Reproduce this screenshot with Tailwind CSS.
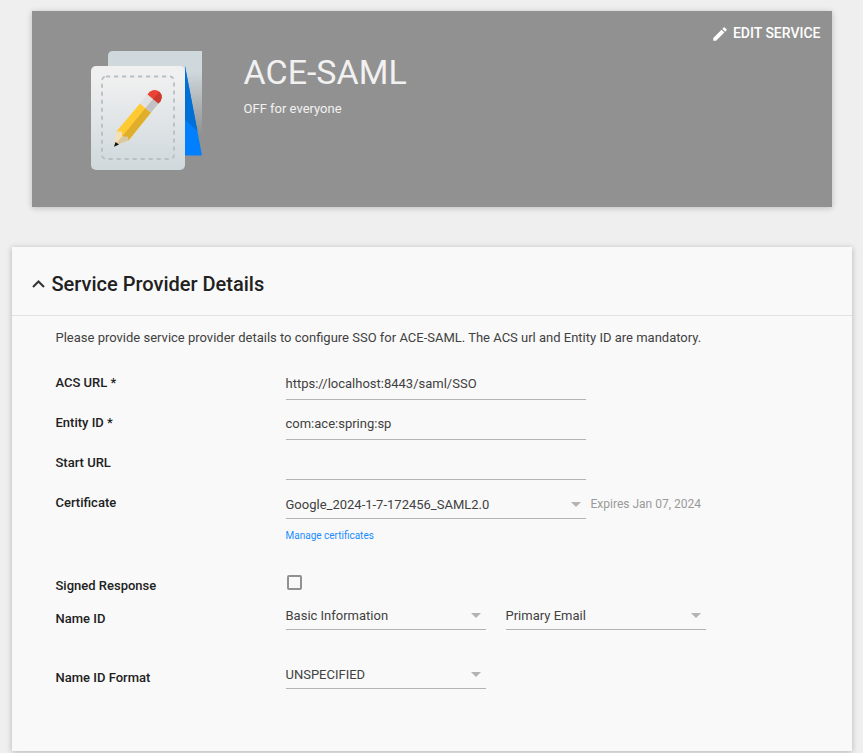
<!DOCTYPE html>
<html lang="en">
<head>
<meta charset="utf-8">
<title>ACE-SAML</title>
<script src="https://cdn.jsdelivr.net/npm/@tailwindcss/browser@4"></script>
</head>
<body class="bg-[#efefef] h-[753px] overflow-hidden font-['Roboto',sans-serif] text-[13px] leading-5 text-[#414141]">
<header class="mt-[11px] ml-[31.500px] w-[800px] h-[196px] bg-[#919191] shadow-[0_1px_6px_rgba(0,0,0,0.22)] flex justify-between text-[#f1f1f1]">
  <div class="flex">
    <svg class="mt-10 ml-[59.500px] w-[112px] h-[120px]" viewBox="0 0 112 120">
      <defs>
        <linearGradient id="back" x1="0" y1="0" x2="0" y2="1"><stop offset="0.25" stop-color="#cfd8dc"/><stop offset="1" stop-color="#919191"/></linearGradient>
        <linearGradient id="front" x1="0" y1="0" x2="0" y2="1"><stop offset="0.1" stop-color="#f0f0f0"/><stop offset="1" stop-color="#cfd8dc"/></linearGradient>
      </defs>
      <path d="M22 0H111V83H17V5Q17 0 22 0Z" fill="url(#back)"/>
      <path d="M94 15 111 104.500H94Z" fill="#0080ff"/>
      <path d="M94 15 106.500 80 94 69Z" fill="#006fd6"/>
      <rect x="0" y="15" width="94" height="104" rx="5" fill="url(#front)"/>
      <rect x="11" y="25.500" width="72" height="82.500" rx="4" fill="none" stroke="#b5bfc4" stroke-width="1.800" stroke-dasharray="4.200 3.800"/>
      <path d="M25.500 80.500 49 52.500 60 61.500 37.500 89.500Z" fill="#ffca32"/>
      <path d="M54.500 57 60 61.500 37.500 89.500 31.500 85Z" fill="#dfaf2b"/>
      <path d="M49 52.500 56.500 43.500 67.500 52.500 60 61.500Z" fill="#e2e2e2"/>
      <path d="M54.500 57 62 48 67.500 52.500 60 61.500Z" fill="#c2c2c2"/>
      <path d="M56.500 43.500A7.800 7.800 0 0 1 68.500 40.700 7.800 7.800 0 0 1 67.500 52.500Z" fill="#ea4335"/>
      <path d="M62 48 68.500 40.700A7.800 7.800 0 0 1 67.500 52.500Z" fill="#cb3a2e"/>
      <path d="M25.500 80.500H31V85.500L37.500 89.500 23 95Z" fill="#f5e0b5"/>
      <path d="M23 95 31 85.500 37 85.500 37.500 89.500Z" fill="#dbc8a1"/>
      <path d="M24.500 91 28 93.500 23 95.700Z" fill="#111"/>
    </svg>
    <div class="ml-[40.500px] pt-[41px]">
      <h1 class="text-[34px] leading-10 font-normal">ACE-SAML</h1>
      <p class="mt-[7px]">OFF for everyone</p>
    </div>
  </div>
  <div class="flex h-5 mt-3 mr-[11px] items-center gap-1 text-[14px] font-medium text-white">
    <svg class="w-[18px] h-[18px] mt-px" viewBox="0 0 24 24" fill="currentColor"><path d="M3 17.250V21h3.750L17.810 9.940l-3.750-3.750L3 17.250zM20.710 7.040a1 1 0 0 0 0-1.410l-2.340-2.340a1 1 0 0 0-1.410 0l-1.830 1.830 3.750 3.750 1.830-1.830z"/></svg>
    <span>EDIT SERVICE</span>
  </div>
</header>
<main class="mt-10 ml-[11.500px] w-[840px] h-[504px] bg-[#f9f9f9] shadow-[0_1px_6px_rgba(0,0,0,0.25)]">
  <div class="h-[69px] border-b border-[#e2e2e2] flex items-center pl-5 pt-[6px] text-[#212121]">
    <svg class="w-[13px] h-2" viewBox="0 0 13 8" fill="none" stroke="#333" stroke-width="2"><path d="M1 7 6.500 1.500 12 7"/></svg>
    <h2 class="ml-[7px] text-[20px] leading-6 font-medium">Service Provider Details</h2>
  </div>
  <div class="pl-11">
    <p class="pt-3 h-11">Please provide service provider details to configure SSO for ACE-SAML. The ACS url and Entity ID are mandatory.</p>
    <div class="flex h-10">
      <div class="w-[230px] pt-[13px] font-medium text-[#212121]">ACS URL *</div>
      <div class="w-[300px] pt-[14px] border-b border-[#b3b3b3]">https://localhost:8443/saml/SSO</div>
    </div>
    <div class="flex h-10">
      <div class="w-[230px] pt-[13px] font-medium text-[#212121]">Entity ID *</div>
      <div class="w-[300px] pt-[14px] border-b border-[#b3b3b3]">com:ace:spring:sp</div>
    </div>
    <div class="flex h-10">
      <div class="w-[230px] pt-[13px] font-medium text-[#212121]">Start URL</div>
      <div class="w-[300px] border-b border-[#b3b3b3]"></div>
    </div>
    <div class="flex h-[94px]">
      <div class="w-[230px] pt-[13px] font-medium text-[#212121]">Certificate</div>
      <div>
        <div class="flex">
          <div class="w-[300px] h-[39px] pt-[15px] pr-[5px] border-b border-[#b3b3b3] flex justify-between"><span>Google_2024-1-7-172456_SAML2.0</span><svg class="w-[10px] h-[5px] mt-[7px]" viewBox="0 0 10 5"><path d="M0 0H10L5 5Z" fill="#b3b3b3"/></svg></div>
          <span class="ml-[5px] pt-[14px] text-[12px] text-[#999999]">Expires Jan 07, 2024</span>
        </div>
        <div class="mt-[7px] text-[10px] text-[#1a8cff]">Manage certificates</div>
      </div>
    </div>
    <div class="flex h-[26px]">
      <div class="w-[230px] pt-[2px] font-medium text-[#212121]">Signed Response</div>
      <div class="ml-[1.500px] mt-[0.500px] w-[15px] h-[15px] border-2 border-[#919191] rounded-[2px]"></div>
    </div>
    <div class="flex h-[59px]">
      <div class="w-[230px] pt-[9px] font-medium text-[#212121]">Name ID</div>
      <div class="w-[200px] h-[30px] pt-[6px] pr-[5px] border-b border-[#b3b3b3] flex justify-between"><span>Basic Information</span><svg class="w-[10px] h-[5px] mt-[7px]" viewBox="0 0 10 5"><path d="M0 0H10L5 5Z" fill="#b3b3b3"/></svg></div>
      <div class="ml-5 w-[200px] h-[30px] pt-[6px] pr-[5px] border-b border-[#b3b3b3] flex justify-between"><span>Primary Email</span><svg class="w-[10px] h-[5px] mt-[7px]" viewBox="0 0 10 5"><path d="M0 0H10L5 5Z" fill="#b3b3b3"/></svg></div>
    </div>
    <div class="flex">
      <div class="w-[230px] pt-[9px] font-medium text-[#212121]">Name ID Format</div>
      <div class="w-[200px] h-[30px] pt-[6px] pr-[5px] border-b border-[#b3b3b3] flex justify-between"><span>UNSPECIFIED</span><svg class="w-[10px] h-[5px] mt-[7px]" viewBox="0 0 10 5"><path d="M0 0H10L5 5Z" fill="#b3b3b3"/></svg></div>
    </div>
  </div>
</main>
</body>
</html>
